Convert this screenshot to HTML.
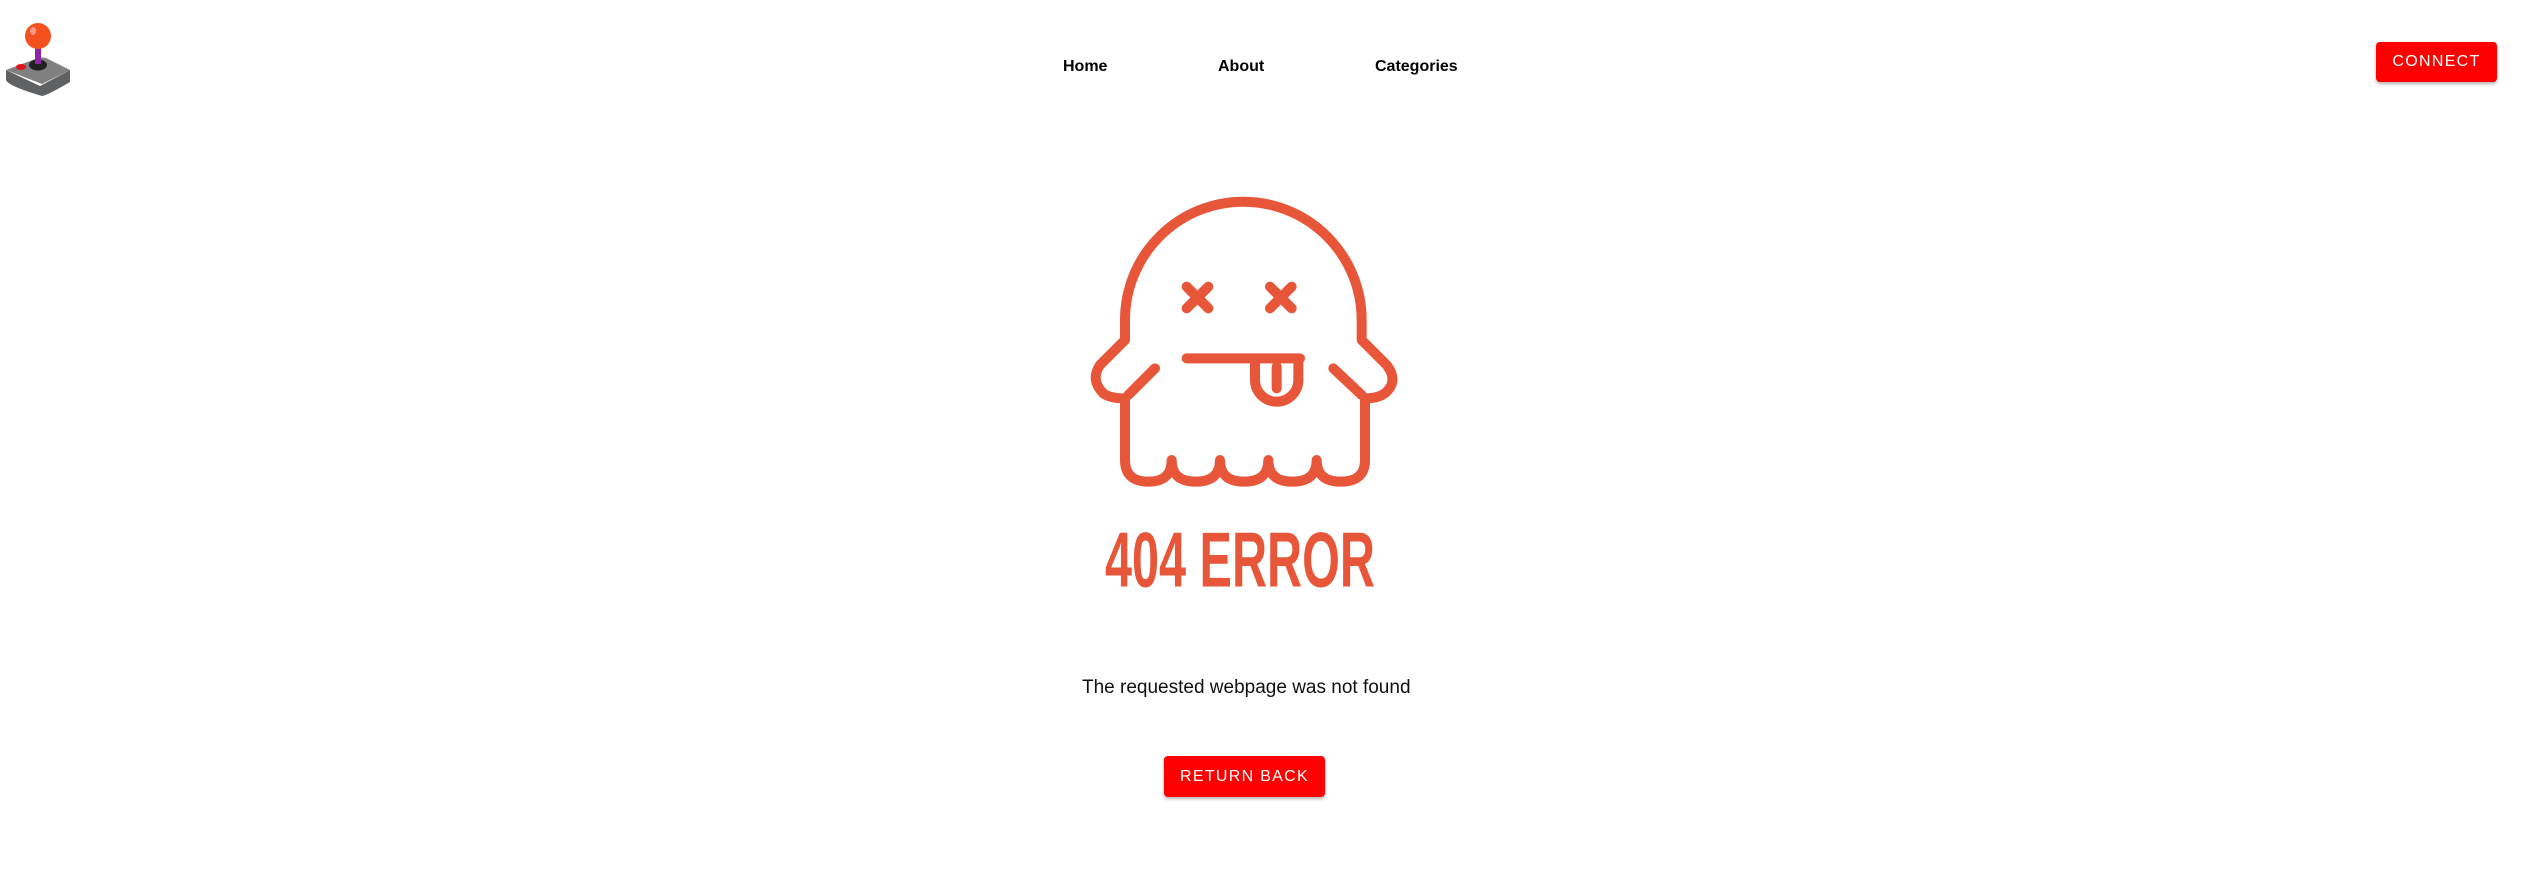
<!DOCTYPE html>
<html><head><style>
body{margin:0;width:2530px;height:875px;background:#fff;position:relative;overflow:hidden;font-family:"Liberation Sans",sans-serif}
.nav{position:absolute;top:58px;font-weight:bold;font-size:16px;color:#000;font-family:"Liberation Sans",sans-serif}
.btn{position:absolute;background:#f00;color:#fff;border-radius:4px;box-shadow:0 2px 3px rgba(0,0,0,.3);font-size:16px;letter-spacing:1.3px;display:flex;align-items:center;justify-content:center}
</style></head><body>
<svg style="position:absolute;left:0;top:0" width="120" height="150" viewBox="0 0 120 150">
<path d="M6 70 L6 80 Q8 86 42 96 Q46 96 70 82 L70 70 L40 86 Z" fill="#5f6163"/>
<path d="M6 70 L38 58 Q42 57 46 58 L70 70 L42 84 Z" fill="#808080"/>
<ellipse cx="21" cy="67" rx="5" ry="3" fill="#e0141b"/>
<ellipse cx="38" cy="65" rx="9" ry="5.5" fill="#222"/>
<rect x="35" y="43" width="6" height="21" fill="#8e24aa"/>
<circle cx="38" cy="36" r="13" fill="#f4511e"/>
<ellipse cx="33" cy="31" rx="3" ry="4" fill="#ff9a80"/>
</svg>
<div class="nav" style="left:1063px">Home</div>
<div class="nav" style="left:1218px">About</div>
<div class="nav" style="left:1375px">Categories</div>
<div class="btn" style="left:2376px;top:42px;width:121px;height:40px">CONNECT</div>
<svg style="position:absolute;left:1050px;top:180px" width="430" height="430" viewBox="0 0 1290 1290">
<g fill="none" stroke="#e8563a" stroke-width="30" stroke-linecap="round" stroke-linejoin="round">
<path d="M225 480 L225 420 A355 355 0 0 1 935 420 L935 480 L1010 555 Q1045 600 1010 635 Q990 655 945 655 L945 840 Q945 905 872 905 Q800 905 800 840 Q800 905 727 905 Q655 905 655 840 Q655 905 582 905 Q510 905 510 840 Q510 905 437 905 Q365 905 365 840 Q365 905 295 905 Q225 905 225 840 L225 655 Q180 655 160 640 Q120 600 150 555 Z"/>
<path d="M315 565 L235 645 M850 565 L935 645"/>
<path d="M410 320 L475 385 M475 320 L410 385 M660 320 L725 385 M725 320 L660 385"/>
<path d="M410 535 L750 535 M615 535 L615 600 A65 65 0 0 0 745 600 L745 535 M680 560 L680 625"/>
</g>
<text x="165" y="1220" font-family="Liberation Sans,sans-serif" font-weight="bold" font-size="235" fill="#e8563a" textLength="810" lengthAdjust="spacingAndGlyphs">404 ERROR</text>
</svg>
<div style="position:absolute;left:1082px;top:677px;font-size:19px;color:#111;font-family:'Liberation Sans',sans-serif">The requested webpage was not found</div>
<div class="btn" style="left:1164px;top:756px;width:161px;height:41px">RETURN BACK</div>
</body></html>
